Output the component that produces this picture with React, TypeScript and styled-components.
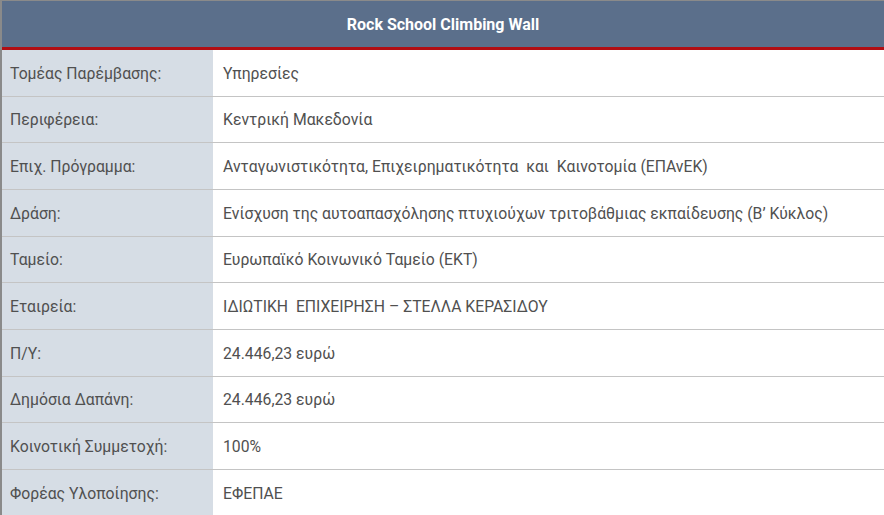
import styled, { createGlobalStyle } from "styled-components";

type RowType = {
  label: string;
  value: string;
};

const ROWS: RowType[] = [
  { label: "Τομέας Παρέμβασης:", value: "Υπηρεσίες" },
  { label: "Περιφέρεια:", value: "Κεντρική Μακεδονία" },
  {
    label: "Επιχ. Πρόγραμμα:",
    value: "Ανταγωνιστικότητα, Επιχειρηματικότητα  και  Καινοτομία (ΕΠΑνΕΚ)",
  },
  {
    label: "Δράση:",
    value:
      "Ενίσχυση της αυτοαπασχόλησης πτυχιούχων τριτοβάθμιας εκπαίδευσης (Β’ Κύκλος)",
  },
  { label: "Ταμείο:", value: "Ευρωπαϊκό Κοινωνικό Ταμείο (ΕΚΤ)" },
  { label: "Εταιρεία:", value: "ΙΔΙΩΤΙΚΗ  ΕΠΙΧΕΙΡΗΣΗ – ΣΤΕΛΛΑ ΚΕΡΑΣΙΔΟΥ" },
  { label: "Π/Υ:", value: "24.446,23 ευρώ" },
  { label: "Δημόσια Δαπάνη:", value: "24.446,23 ευρώ" },
  { label: "Κοινοτική Συμμετοχή:", value: "100%" },
  { label: "Φορέας Υλοποίησης:", value: "ΕΦΕΠΑΕ" },
];

const GlobalStyle = createGlobalStyle`
  body {
    margin: 0;
    background: #ffffff;
    font-family: Roboto, "Liberation Sans", sans-serif;
  }
`;

export default function App() {
  return (
    <>
      <GlobalStyle />
      <Table>
        <Title>Rock School Climbing Wall</Title>
        {ROWS.map((row: RowType) => (
          <Row key={row.label}>
            <Label>{row.label}</Label>
            <Value>{row.value}</Value>
          </Row>
        ))}
      </Table>
    </>
  );
}

const Table = styled.div`
  border-left: 2px solid #8a8a8a;
  border-top: 1px solid #8a8a8a;
  display: flex;
  flex-direction: column;
`;

const Title = styled.div`
  background-color: #5b6f8b;
  color: #ffffff;
  font-weight: 700;
  font-size: 16px;
  height: 46px;
  display: flex;
  align-items: center;
  justify-content: center;
  border-bottom: 3px solid #b10e14;
`;

const Row = styled.div`
  display: grid;
  grid-template-columns: 211px 1fr;
  height: 46.67px;
  box-sizing: border-box;
  border-bottom: 1px solid #c4c4c4;
  font-size: 15.75px;
  color: #505050;
  white-space: pre;
`;

const Label = styled.div`
  background-color: #d6dde5;
  padding-left: 8px;
  padding-top: 1px;
  display: flex;
  align-items: center;
`;

const Value = styled.div`
  background-color: #ffffff;
  padding-left: 10px;
  padding-top: 1px;
  display: flex;
  align-items: center;
`;
